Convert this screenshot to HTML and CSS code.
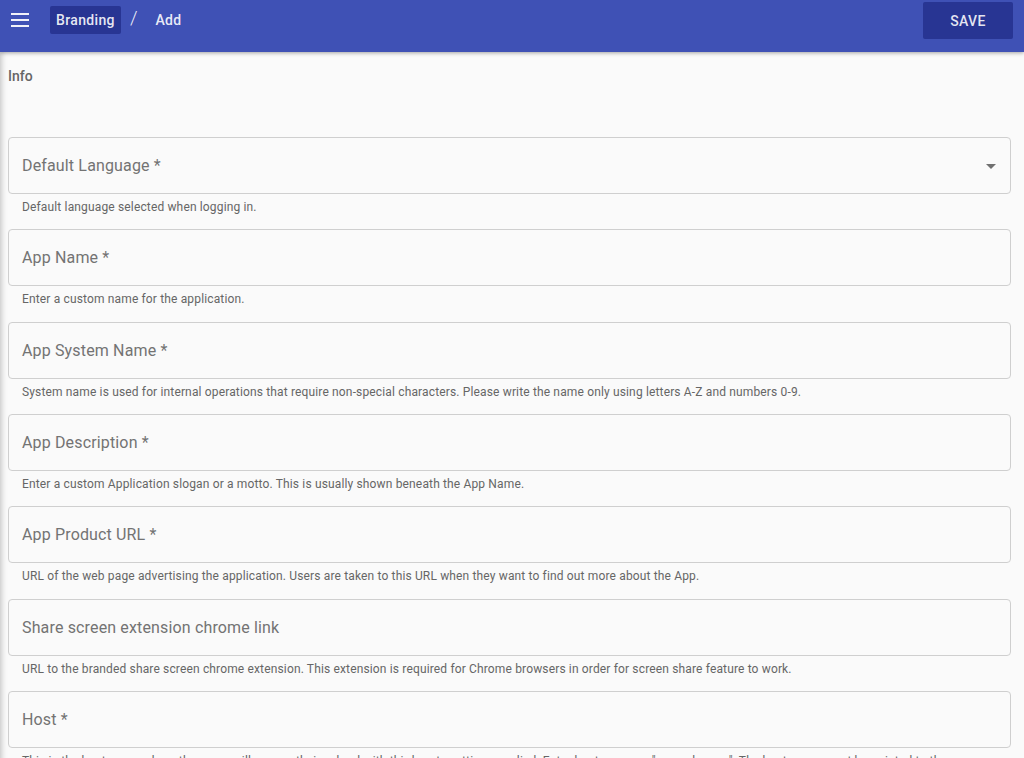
FILE: index.html
```html
<!DOCTYPE html>
<html lang="en">
<head>
<meta charset="utf-8">
<title>Branding / Add</title>
<link rel="stylesheet" href="styles.css">
</head>
<body>
<header class="topbar">
  <button class="menu-btn" aria-label="Menu">
    <svg width="18" height="14" viewBox="0 0 18 14"><rect x="0" y="0" width="18" height="2" fill="currentColor"/><rect x="0" y="6" width="18" height="2" fill="currentColor"/><rect x="0" y="12" width="18" height="2" fill="currentColor"/></svg>
  </button>
  <nav class="crumbs">
    <span class="crumb crumb-active">Branding</span>
    <span class="crumb-sep">/</span>
    <span class="crumb">Add</span>
  </nav>
  <button class="save-btn">SAVE</button>
</header>
<main class="content">
  <h2 class="section-title">Info</h2>

  <div class="field-group">
    <div class="field field-select">
      <span class="field-label">Default Language *</span>
      <svg class="select-arrow" width="10" height="5" viewBox="0 0 10 5"><path d="M0 0 L10 0 L5 5 Z" fill="currentColor"/></svg>
    </div>
    <p class="hint">Default language selected when logging in.</p>
  </div>

  <div class="field-group">
    <div class="field"><span class="field-label">App Name *</span></div>
    <p class="hint">Enter a custom name for the application.</p>
  </div>

  <div class="field-group">
    <div class="field"><span class="field-label">App System Name *</span></div>
    <p class="hint">System name is used for internal operations that require non-special characters. Please write the name only using letters A-Z and numbers 0-9.</p>
  </div>

  <div class="field-group">
    <div class="field"><span class="field-label">App Description *</span></div>
    <p class="hint">Enter a custom Application slogan or a motto. This is usually shown beneath the App Name.</p>
  </div>

  <div class="field-group">
    <div class="field"><span class="field-label">App Product URL *</span></div>
    <p class="hint">URL of the web page advertising the application. Users are taken to this URL when they want to find out more about the App.</p>
  </div>

  <div class="field-group">
    <div class="field"><span class="field-label">Share screen extension chrome link</span></div>
    <p class="hint">URL to the branded share screen chrome extension. This extension is required for Chrome browsers in order for screen share feature to work.</p>
  </div>

  <div class="field-group">
    <div class="field"><span class="field-label">Host *</span></div>
    <p class="hint">This is the host name where the users will access their school with third-party settings applied. Enter host name as "example.com". The host name must be pointed to the server.</p>
  </div>
</main>
</body>
</html>
```

FILE: styles.css
```css
html, body {
  margin: 0;
  padding: 0;
}

body {
  background: #fafafa;
  font-family: Roboto, "Liberation Sans", Arial, sans-serif;
  overflow: hidden;
}

.topbar {
  position: relative;
  z-index: 2;
  height: 52px;
  box-sizing: border-box;
  padding: 0 11px 12px 11px;
  display: flex;
  align-items: center;
  background: #3f51b5;
  box-shadow: 0 1px 4px rgba(0, 0, 0, 0.35);
  color: rgba(255, 255, 255, 0.9);
}

.menu-btn {
  display: flex;
  align-items: center;
  padding: 0;
  margin: 0 21px 0 0;
  border: 0;
  background: transparent;
  color: rgba(255, 255, 255, 0.92);
  width: 18px;
  height: 14px;
}

.crumbs {
  display: flex;
  align-items: center;
  flex: 1;
  font-size: 14px;
  font-weight: 500;
}

.crumb {
  display: flex;
  align-items: center;
  height: 28px;
  padding: 0 6px;
  border-radius: 2px;
  letter-spacing: 0.35px;
}

.crumb-active {
  background: #283593;
}

.crumb-sep {
  font-size: 19px;
  font-weight: 300;
  margin: -6px 12px 0 9px;
}

.save-btn {
  width: 90px;
  height: 37px;
  margin-top: 1px;
  border: 0;
  border-radius: 2px;
  background: #283593;
  color: rgba(255, 255, 255, 0.88);
  font-family: inherit;
  font-size: 14px;
  font-weight: 500;
  letter-spacing: 0.4px;
}

.content {
  position: relative;
  min-height: 706px;
  padding: 14px 13px 0 8px;
  box-shadow: inset 7px 0 6px -6px rgba(0, 0, 0, 0.25);
}

.section-title {
  margin: 0 0 51px 0;
  font-size: 14px;
  line-height: 20px;
  font-weight: 500;
  color: #666;
}

.field-group {
  height: 92.33px;
}

.field {
  height: 57px;
  box-sizing: border-box;
  border: 1px solid #cfcfcf;
  border-radius: 4px;
  display: flex;
  align-items: center;
  padding: 0 14px 0 13px;
  background: #fafafa;
}

.field-label {
  flex: 1;
  font-size: 16px;
  color: #737373;
  letter-spacing: 0.15px;
}

.select-arrow {
  color: #707070;
  margin-top: 1px;
}

.hint {
  margin: 5px 0 0 0;
  padding-left: 14px;
  font-size: 12px;
  line-height: 16px;
  color: #666;
  letter-spacing: 0.15px;
}
```
